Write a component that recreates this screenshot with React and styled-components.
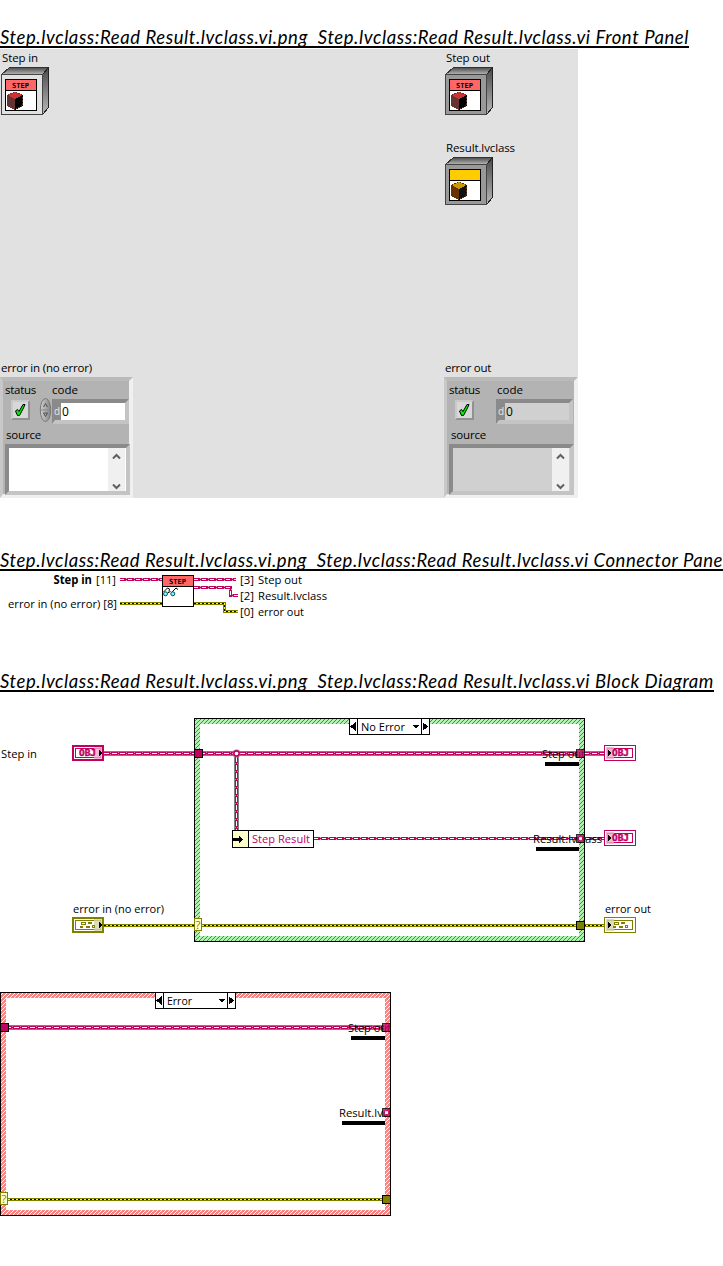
import React, { useLayoutEffect, useRef, useState } from "react";
import styled, { createGlobalStyle } from "styled-components";

const MAGENTA = "#c1005f";
const OLIVE = "#808000";
const UI_FONT = '"Open Sans", "Noto Sans", sans-serif';

const GlobalStyle = createGlobalStyle`
  body { margin: 0; background: #fff; color: #000; }
  * { box-sizing: border-box; }
`;

const Page = styled.main`
  width: 723px;
  height: 1266px;
  overflow: hidden;
  display: flex;
  flex-direction: column;
  align-items: flex-start;
  padding-top: 24px;
`;

const Heading = styled.h2`
  margin: ${(p) => p.$gap || 0}px 0 0;
  height: 24px;
  flex: none;
  overflow: hidden;
  border-bottom: 2px solid #000;
  font: italic 400 18.5px/26px Lato, sans-serif;
  width: ${(p) => p.$width}px;
`;

const Fitted = styled.span`
  display: inline-block;
  white-space: pre;
`;

/* Spreads its letters so that the line takes exactly the given width. */
function FitText({ width, children }) {
  const ref = useRef(null);
  const [spacing, setSpacing] = useState(0);
  useLayoutEffect(() => {
    const natural = ref.current.getBoundingClientRect().width;
    setSpacing((width - natural) / children.length);
  }, []);
  return <Fitted ref={ref} style={{ letterSpacing: spacing }}>{children}</Fitted>;
}

/* ---------- front panel ---------- */

const FrontPanel = styled.section`
  margin-top: 1px;
  width: 578px;
  height: 449px;
  flex: none;
  background: #e1e1e1;
  display: flex;
  justify-content: space-between;
`;

const PanelColumn = styled.div`
  width: 134px;
  display: flex;
  flex-direction: column;
`;

const ObjectControl = styled.div`
  height: 72px;
  padding-left: 1px;
`;

const Caption = styled.div`
  height: ${(p) => p.$height || 18}px;
  padding-left: ${(p) => p.$indent || 0}px;
  font: 11.5px/18px ${UI_FONT};
  white-space: nowrap;
`;

const ClusterBlock = styled.div`
  margin-top: auto;
`;

const Cluster = styled.div`
  width: ${(p) => (p.$output ? 134 : 133)}px;
  height: 121px;
  padding: 1px 0 0 1px;
  background: #b3b3b3;
  border-style: solid;
  border-width: 4px 4px 4px 3px;
  border-color: #bababa #f0f0f0 #f0f0f0 #c8c8c8;
`;

const LabelRow = styled.div`
  display: flex;
  height: 18px;
  margin-top: -1px;
`;

const StatusCell = styled.div`
  width: 48px;
`;

const ControlRow = styled.div`
  display: flex;
  height: 25px;
  margin-bottom: 2px;
`;

const StatusButton = styled.div`
  width: 19px;
  height: 20px;
  margin: 1px 0 0 7px;
  background: #d8d8d8;
  border: 2px solid;
  border-color: #c9c9c9 #919191 #919191 #c9c9c9;
`;

const SpinnerSlot = styled.div`
  width: 22px;
  flex: none;
  padding-left: 10px;
  svg { display: block; overflow: visible; }
`;

const NumberField = styled.div`
  width: 77px;
  flex: none;
  height: 25px;
  display: flex;
  border-style: solid;
  border-width: 4px 4px 4px 3px;
  border-color: #8a8a8a #c4c4c4 #c4c4c4 #8a8a8a;
  background: ${(p) => (p.$output ? "#d0d0d0" : "#fff")};
  font: 12px/17px ${UI_FONT};
`;

const Radix = styled.span`
  width: 6px;
  background: #8a8a8a;
  color: #e8e8e8;
  font-size: 10px;
  text-indent: -1px;
  margin-right: 1px;
`;

const SourceBox = styled.div`
  width: 125px;
  height: 51px;
  margin-left: 1px;
  display: flex;
  justify-content: flex-end;
  border-style: solid;
  border-width: 4px;
  border-color: #8a8a8a #c4c4c4 #c4c4c4 #8a8a8a;
  background: ${(p) => (p.$output ? "#d0d0d0" : "#fff")};
`;

const ScrollBar = styled.div`
  width: 17px;
  margin-right: 1px;
  padding: 5px 4px 1px;
  background: #f0f0f0;
  display: flex;
  flex-direction: column;
  justify-content: space-between;
  svg { display: block; }
`;

const Chevron = ({ down }) => (
  <svg width="9" height="7" viewBox="0 0 9 7">
    <path d={down ? "M1 1.5 4.5 5 8 1.5" : "M1 5.5 4.5 2 8 5.5"} fill="none" stroke="#606060" strokeWidth="2" />
  </svg>
);

const Tiny = styled.text`
  font: 700 ${(p) => p.$size || 7}px "DejaVu Sans Mono", monospace;
`;

function ObjectIcon({ face, header, tag, cube }) {
  const id = `side-${face.slice(1)}-${header.slice(1)}`;
  return (
    <svg width="48" height="48" viewBox="0 0 48 48" shapeRendering="crispEdges" display="block">
      <defs>
        <linearGradient id={id} x1="0" y1="0" x2="0" y2="1">
          <stop offset="0" stopColor="#4a4a4a" />
          <stop offset="1" stopColor="#b8b8b8" />
        </linearGradient>
      </defs>
      <path d="M0.5 7.5 8.5 0.5H47.5L41.5 7.5Z" fill={`url(#${id})`} stroke="#333" />
      <path d="M41.5 7.5 47.5 0.5V40.5L41.5 47.5Z" fill={`url(#${id})`} stroke="#222" />
      <rect x="0.5" y="7.5" width="41" height="40" fill={face} stroke="#444" />
      <rect x="4.5" y="12.5" width="31" height="31" fill="#fff" stroke="#000" />
      <rect x="5" y="13" width="30" height="10" fill={header} />
      <path d="M4 23.5H36" stroke="#000" />
      {tag && <Tiny x="11" y="20.5" textLength="17" lengthAdjust="spacingAndGlyphs">{tag}</Tiny>}
      <path d="M6 28 14 24.5 22 28 14 32Z" fill={cube[0]} />
      <path d="M6 28 14 32V43L6 38.5Z" fill={cube[1]} />
      <path d="M22 28 14 32V43L22 38.5Z" fill={cube[2]} />
      <path d="M6.5 28.5 14 24.5 21.5 28.5V38.5L14 42.5 6.5 38.5Z" fill="none" stroke={cube[1]} strokeDasharray="2 1" />
    </svg>
  );
}

const RED_CUBE = ["#cc3333", "#663333", "#000"];
const GOLD_CUBE = ["#cc9900", "#663300", "#111"];

const CheckMark = () => (
  <svg width="15" height="16" viewBox="0 0 15 16" display="block">
    <path d="M2.5 9 4.5 7.5 6 9.5 10 2.5 12 2.5 10.5 6 6.5 13.5 4.5 13.5Z" fill="#00f000" stroke="#000" />
  </svg>
);

const Spinner = () => (
  <svg width="12" height="24" viewBox="0 0 12 24">
    <defs>
      <linearGradient id="spin">
        <stop offset="0" stopColor="#d0d0d0" />
        <stop offset="1" stopColor="#858585" />
      </linearGradient>
    </defs>
    <ellipse cx="5.5" cy="11" rx="5.2" ry="11.5" fill="url(#spin)" stroke="#777" />
    <path d="M0 11H11" stroke="#888" />
    <path d="M3.5 8 5.5 4.5 7.5 8M3.5 14H7.5L5.5 17.5Z" fill="none" stroke="#505050" />
  </svg>
);

function ErrorCluster({ output }) {
  return (
    <Cluster $output={output}>
      <LabelRow>
        <StatusCell><Caption $indent={1}><FitText width={31}>status</FitText></Caption></StatusCell>
        <Caption $indent={output ? 1 : 0}><FitText width={26}>code</FitText></Caption>
      </LabelRow>
      <ControlRow>
        <StatusButton><CheckMark /></StatusButton>
        <SpinnerSlot>{!output && <Spinner />}</SpinnerSlot>
        <NumberField $output={output}><Radix>d</Radix>0</NumberField>
      </ControlRow>
      <Caption $indent={output ? 3 : 2}><FitText width={35}>source</FitText></Caption>
      <SourceBox $output={output}><ScrollBar><Chevron /><Chevron down /></ScrollBar></SourceBox>
    </Cluster>
  );
}

/* ---------- wires and nodes ---------- */

const Drawing = styled.svg`
  display: block;
  flex: none;
  overflow: hidden;
`;

const Text = styled.text`
  font: ${(p) => (p.$bold ? 700 : 400)} 11.5px ${UI_FONT};
  fill: ${(p) => p.$color || "#000"};
`;

const Label = ({ x, y, w, children, ...rest }) => (
  <Text x={x} y={y} textLength={w} lengthAdjust="spacingAndGlyphs" {...rest}>{children}</Text>
);

function ObjectWire({ d, thick }) {
  return (
    <g fill="none">
      {thick && <path d={d} stroke="#808080" strokeWidth="5" />}
      <path d={d} stroke={MAGENTA} strokeWidth="3" />
      <path d={d} stroke={thick ? "#d9649c" : "#e79cc0"} strokeWidth="3" strokeDasharray="1 7" strokeDashoffset="-6" />
      <path d={d} stroke={MAGENTA} strokeWidth="1" />
      <path d={d} stroke="#fff" strokeWidth="1" strokeDasharray={thick ? "5 3" : "4 4"} />
    </g>
  );
}

const ErrorWire = ({ d }) => (
  <g fill="none">
    <path d={d} stroke={OLIVE} strokeWidth="3" />
    <path d={d} stroke="#ffff00" />
    <path d={d} stroke="#000" strokeDasharray="2 2" />
  </g>
);

const Tunnel = ({ x, y, color = MAGENTA, dot, ...rest }) => (
  <g {...rest}>
    <rect x={x + 0.5} y={y + 0.5} width="8" height="8" fill={color} stroke="#000" />
    {dot && <rect x={x + 3} y={y + 3} width="3" height="3" fill="#fff" />}
  </g>
);

function Terminal({ x, y, color, tint, output, children }) {
  const b = output ? 1 : 2;
  return (
    <g transform={`translate(${x} ${y})`}>
      <rect x={b / 2} y={b / 2} width={32 - b} height={16 - b} fill="#fff" stroke={color} strokeWidth={b} />
      <rect x="3.5" y="3.5" width="25" height="9" fill="#fff" stroke={color} />
      <rect x={output ? 2 : 22} y="2" width="8" height="12" fill={tint} opacity=".8" />
      {children}
      <path d={output ? "M4 5V11L8 8Z" : "M27 5V11L31 8Z"} fill="#000" />
    </g>
  );
}

const ObjTerminal = (p) => (
  <Terminal {...p} color={MAGENTA} tint="#efaacb">
    <Tiny $size={8} x={p.output ? 8 : 7} y="11" fill={MAGENTA} stroke={MAGENTA} strokeWidth=".4" textLength="17" lengthAdjust="spacingAndGlyphs">OBJ</Tiny>
  </Terminal>
);

const ErrTerminal = (p) => (
  <Terminal {...p} color={OLIVE} tint="#d4d4aa">
    <g transform={p.output ? "translate(1 0)" : undefined} fill="none" stroke={OLIVE}>
      <rect x="9.5" y="5.5" width="4" height="2" />
      <path d="M16 6H20M8 10H11M14 10H18" strokeWidth="2" />
      <rect x="20.5" y="8.5" width="2" height="2" />
    </g>
  </Terminal>
);

function CaseFrame({ title, hatch }) {
  return (
    <g>
      <path d="M194 718H585V942H194Z M200 724V936H579V724Z" fill={`url(#${hatch})`} fillRule="evenodd" />
      <rect x="194.5" y="718.5" width="390" height="223" fill="none" stroke="#000" />
      <rect x="349.5" y="718.5" width="80" height="16" fill="#fff" stroke="#000" />
      <path d="M357.5 719V735M421.5 719V735" stroke="#000" />
      <path d="M356 722V731L350 726.5ZM422.5 722V731L428.5 726.5ZM412 724.5H420L415.7 728.7Z" />
      <Label x={361} y={731} w={title === "Error" ? 25 : 44}>{title}</Label>
    </g>
  );
}

const OutputLabels = () => (
  <g>
    <Label x={542} y={758} w={43}>Step out</Label>
    <rect x="545" y="762" width="34" height="4" />
    <Label x={533} y={843} w={69}>Result.lvclass</Label>
    <rect x="536" y="847" width="43" height="4" />
  </g>
);

const Tunnels = () => (
  <g>
    <Tunnel x={194} y={749} />
    <Tunnel x={576} y={749} opacity=".8" />
    <Tunnel x={576} y={834} dot opacity=".8" />
    <Tunnel x={576} y={921} color={OLIVE} />
    <rect x="194.5" y="918.5" width="7" height="12" fill="#ffffcc" stroke={OLIVE} />
    <Text x="195.5" y="929" $color={OLIVE}>?</Text>
  </g>
);

function ConnectorPane() {
  return (
    <Drawing width="723" height="97" viewBox="0 571 723 97" shapeRendering="crispEdges">
      <Label x={53.5} y={584} w={38.5} $bold>Step in</Label>
      <Label x={96} y={584} w={20}>[11]</Label>
      <Label x={8} y={608} w={109}>error in (no error) [8]</Label>
      <ObjectWire d="M120 579.5H162" />
      <ErrorWire d="M120 603.5H162" />
      <ObjectWire d="M194 579.5H236" />
      <ObjectWire d="M194 587.5H230.5V595.5H238" />
      <ErrorWire d="M194 603.5H224.5V611.5H238" />
      <rect x="162.5" y="575.5" width="31" height="31" fill="#fff" stroke="#000" />
      <rect x="163" y="576" width="30" height="10" fill="#ff6666" />
      <path d="M162 586.5H194" stroke="#000" />
      <Tiny x="169" y="583.5" textLength="17" lengthAdjust="spacingAndGlyphs">STEP</Tiny>
      <g shapeRendering="auto">
        <path d="M163.5 592 167.5 588 169.5 589 169 591.5M167.5 593 170.5 591.5M172 592 176 588 178 589.5" fill="none" stroke="#000" />
        <circle cx="165.5" cy="593.8" r="2" fill="#7ff4ff" stroke="#00525c" />
        <circle cx="172.8" cy="593.8" r="2" fill="#7ff4ff" stroke="#00525c" />
      </g>
      <Label x={240} y={584} w={14}>[3]</Label>
      <Label x={258} y={584} w={44}>Step out</Label>
      <Label x={240} y={600} w={14}>[2]</Label>
      <Label x={258} y={600} w={69}>Result.lvclass</Label>
      <Label x={240} y={616} w={14}>[0]</Label>
      <Label x={258} y={616} w={46}>error out</Label>
    </Drawing>
  );
}

function BlockDiagram() {
  return (
    <Drawing width="723" height="574" viewBox="0 692 723 574" shapeRendering="crispEdges">
      <defs>
        <pattern id="green" width="4" height="4" patternUnits="userSpaceOnUse">
          <rect width="4" height="4" fill="#b0f2b0" />
          <path d="M3 0h1v1h-1zM2 1h1v1h-1zM1 2h1v1h-1zM0 3h1v1h-1z" fill="#6c706c" />
        </pattern>
        <pattern id="red" width="4" height="4" patternUnits="userSpaceOnUse">
          <rect width="4" height="4" fill="#f28484" />
          <path d="M3 0h1v1h-1zM2 1h1v1h-1zM1 2h1v1h-1zM0 3h1v1h-1z" fill="#fff" />
        </pattern>
        <clipPath id="frame"><rect x="194" y="718" width="391" height="224" /></clipPath>
      </defs>

      <CaseFrame title="No Error" hatch="green" />
      <ObjectWire d="M104 753.5H578" thick />
      <ObjectWire d="M584 753.5H604" thick />
      <ObjectWire d="M236.5 757V830" thick />
      <ObjectWire d="M314 838.5H604" />
      <ErrorWire d="M104 925.5H604" />
      <circle cx="236.5" cy="753.5" r="3.8" fill={MAGENTA} stroke="#999" strokeWidth=".5" shapeRendering="auto" />
      <circle cx="236.5" cy="753.5" r="1.8" fill="#fff" shapeRendering="auto" />
      <rect x="232.5" y="830.5" width="81" height="17" fill="#fff" stroke="#000" />
      <rect x="233" y="831" width="15" height="16" fill="#ffffcc" />
      <path d="M248.5 831V847" stroke="#000" />
      <path d="M233 838H239V835.5L243 839.5 239 843V841H233Z" />
      <Label x={252} y={843} w={58} $color={MAGENTA}>Step Result</Label>
      <OutputLabels />
      <Tunnels />
      <Label x={1} y={758} w={36}>Step in</Label>
      <Label x={73} y={913} w={91}>error in (no error)</Label>
      <Label x={605} y={913} w={46}>error out</Label>
      <ObjTerminal x={72} y={745} />
      <ObjTerminal x={604} y={745} output />
      <ObjTerminal x={604} y={830} output />
      <ErrTerminal x={72} y={917} />
      <ErrTerminal x={604} y={917} output />

      <g transform="translate(-194 274)" clipPath="url(#frame)">
        <CaseFrame title="Error" hatch="red" />
        <ObjectWire d="M200 753.5H578" thick />
        <ErrorWire d="M200 925.5H578" />
        <OutputLabels />
        <Tunnels />
      </g>
    </Drawing>
  );
}

const NAME = "Step.lvclass:Read Result.lvclass.vi";

const Title = ({ kind, width, gap }) => (
  <Heading $width={width} $gap={gap}>
    <FitText width={width}>{`${NAME}.png  ${NAME} ${kind}`}</FitText>
  </Heading>
);

export default function App() {
  return (
    <>
      <GlobalStyle />
      <Page>
        <Title kind="Front Panel" width={689} />
        <FrontPanel>
          <PanelColumn>
            <Caption $indent={2}><FitText width={36}>Step in</FitText></Caption>
            <ObjectControl>
              <ObjectIcon face="#e1e1e1" header="#ff6666" tag="STEP" cube={RED_CUBE} />
            </ObjectControl>
            <ClusterBlock>
              <Caption $indent={1}><FitText width={91}>error in (no error)</FitText></Caption>
              <ErrorCluster />
            </ClusterBlock>
          </PanelColumn>
          <PanelColumn>
            <Caption $indent={2}><FitText width={44}>Step out</FitText></Caption>
            <ObjectControl>
              <ObjectIcon face="#999999" header="#ff6666" tag="STEP" cube={RED_CUBE} />
            </ObjectControl>
            <Caption $indent={2}><FitText width={69}>Result.lvclass</FitText></Caption>
            <ObjectControl>
              <ObjectIcon face="#999999" header="#ffcc00" cube={GOLD_CUBE} />
            </ObjectControl>
            <ClusterBlock>
              <Caption $indent={1}><FitText width={46}>error out</FitText></Caption>
              <ErrorCluster output />
            </ClusterBlock>
          </PanelColumn>
        </FrontPanel>
        <Title kind="Connector Pane" width={723} gap={49} />
        <ConnectorPane />
        <Title kind="Block Diagram" width={714} />
        <BlockDiagram />
      </Page>
    </>
  );
}
